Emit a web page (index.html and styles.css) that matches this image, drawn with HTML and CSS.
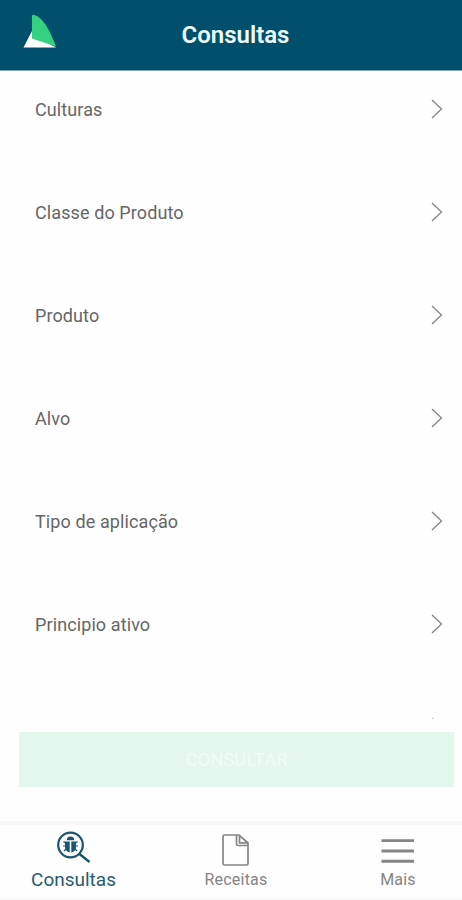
FILE: index.html
```html
<!DOCTYPE html>
<html lang="pt-BR">
<head>
  <meta charset="UTF-8">
  <meta name="viewport" content="width=device-width, initial-scale=1.0">
  <title>Consultas</title>
  <link rel="stylesheet" href="styles.css">
</head>
<body>

  <header class="topbar">
    <svg class="logo" width="36" height="36" viewBox="0 0 36 36">
      <path d="M10 15 L0.5 33.5 H33 L12 22 Z" fill="#fff"/>
      <path d="M9 2 Q9 0.5 11 0.7 C20 4 26 14 33 32.5 L9 24.5 Z" fill="#34d280"/>
    </svg>
    <h1 class="title">Consultas</h1>
  </header>

  <main class="filters">
    <a class="filter">
      <span class="label">Culturas</span>
      <svg class="chevron" viewBox="0 0 12 20"><path d="M1 1 L10.5 10 L1 19"/></svg>
    </a>
    <a class="filter">
      <span class="label">Classe do Produto</span>
      <svg class="chevron" viewBox="0 0 12 20"><path d="M1 1 L10.5 10 L1 19"/></svg>
    </a>
    <a class="filter">
      <span class="label">Produto</span>
      <svg class="chevron" viewBox="0 0 12 20"><path d="M1 1 L10.5 10 L1 19"/></svg>
    </a>
    <a class="filter">
      <span class="label">Alvo</span>
      <svg class="chevron" viewBox="0 0 12 20"><path d="M1 1 L10.5 10 L1 19"/></svg>
    </a>
    <a class="filter">
      <span class="label">Tipo de aplicação</span>
      <svg class="chevron" viewBox="0 0 12 20"><path d="M1 1 L10.5 10 L1 19"/></svg>
    </a>
    <a class="filter">
      <span class="label">Principio ativo</span>
      <svg class="chevron" viewBox="0 0 12 20"><path d="M1 1 L10.5 10 L1 19"/></svg>
    </a>
    <!-- next row, cut off by the button area -->
    <a class="filter faded">
      <span class="label"></span>
      <svg class="chevron" viewBox="0 0 12 20"><path d="M1 1 L10.5 10 L1 19"/></svg>
    </a>
  </main>

  <div class="actions">
    <button class="submit" disabled>CONSULTAR</button>
  </div>

  <nav class="tabs">
    <a class="tab active">
      <svg class="icon" width="36" height="36" viewBox="0 0 36 36">
        <circle cx="14.5" cy="15" r="12.3" fill="none" stroke="#1a5570" stroke-width="2.2"/>
        <path d="M23.5 24 L33.5 32" stroke="#1a5570" stroke-width="2.5"/>
        <path d="M11 10.2 V9 Q11 6.5 14.5 6.5 T18 9 V10.2 Z" fill="#1a5570"/>
        <path d="M13.7 11.5 V22.5 Q9 21.5 9 16.5 V11.5 Z M15.3 11.5 V22.5 Q20 21.5 20 16.5 V11.5 Z" fill="#1a5570"/>
        <path d="M9.5 13 L7.5 11.5 M9.5 16 H7 M10 19 L8 21 M19.5 13 L21.5 11.5 M19.5 16 H22 M19 19 L21 21" stroke="#1a5570" stroke-width="1.2"/>
      </svg>
      <span class="tab-label">Consultas</span>
    </a>
    <a class="tab">
      <svg class="icon" width="36" height="36" viewBox="0 0 36 36">
        <path d="M18.5 5 H6.5 Q5 5 5 6.5 V33.5 Q5 35 6.5 35 H28.5 Q30 35 30 33.5 V15.5 H20 Q18.5 15.5 18.5 14 V5 H21 L30 13 V15.5 M21.5 5 V12.8 H29.5" fill="none" stroke="#858585" stroke-width="1.7"/>
      </svg>
      <span class="tab-label">Receitas</span>
    </a>
    <a class="tab more">
      <svg class="icon" width="36" height="36" viewBox="0 0 36 36">
        <path d="M1.5 10.6 H34 M1.5 21 H34 M1.5 31.3 H34" stroke="#858585" stroke-width="2.9"/>
      </svg>
      <span class="tab-label">Mais</span>
    </a>
  </nav>

</body>
</html>
```
FILE: styles.css
```css
body {
  margin: 0;
  height: 900px;
  display: flex;
  flex-direction: column;
  overflow: hidden;
  font-family: Roboto, "Liberation Sans", sans-serif;
  background-color: #fefefe;
  color: #666;
}

/* Header */
.topbar {
  height: 71px;
  flex: none;
  display: grid;
  grid-template-columns: 58px 1fr 49px;
  align-items: center;
  background-color: #00506d;
  border-bottom: 1px solid #80a6b5;
  box-sizing: border-box;
}
.logo {
  margin: -7px 0 0 23px;
}
.title {
  margin: 0;
  text-align: center;
  font-size: 24px;
  font-weight: 600;
  line-height: 30px;
  color: #eefafc;
}

/* Filter list */
.filters {
  height: 648px;
  flex: none;
  overflow: hidden;
}
.filter {
  height: 103px;
  box-sizing: border-box;
  padding: 27px 19px 0 35px;
  display: flex;
  justify-content: space-between;
  align-items: flex-start;
}
.label {
  font-size: 18px;
  line-height: 24px;
  letter-spacing: 0.1px;
}
.chevron {
  width: 12px;
  height: 20px;
  margin-top: 1px;
  fill: none;
  stroke: #858585;
  stroke-width: 1.3;
}
.faded .chevron {
  opacity: 0.5;
}

/* Button */
.actions {
  flex: 1;
  padding: 13px 8px 0 19px;
}
.submit {
  width: 100%;
  height: 55px;
  border: 0;
  background-color: #e3f7ed;
  color: #f1fcf6;
  font-family: inherit;
  font-size: 18.5px;
}

/* Bottom tabs */
.tabs {
  height: 79px;
  flex: none;
  box-sizing: border-box;
  border-top: 4px solid #f7f7f7;
  border-bottom: 2px solid #fafafa;
  display: grid;
  grid-template-columns: 147px 1fr 137px;
}
.tab {
  display: flex;
  flex-direction: column;
  align-items: center;
  padding-top: 5px;
  color: #858585;
}
.more {
  padding-left: 9px;
}
.icon {
  display: block;
}
.tab-label {
  margin-top: 3px;
  font-size: 16px;
  line-height: 22px;
  letter-spacing: 0.2px;
}
.active .tab-label {
  font-size: 19px;
  letter-spacing: 0;
  color: #285b6f;
}
```
